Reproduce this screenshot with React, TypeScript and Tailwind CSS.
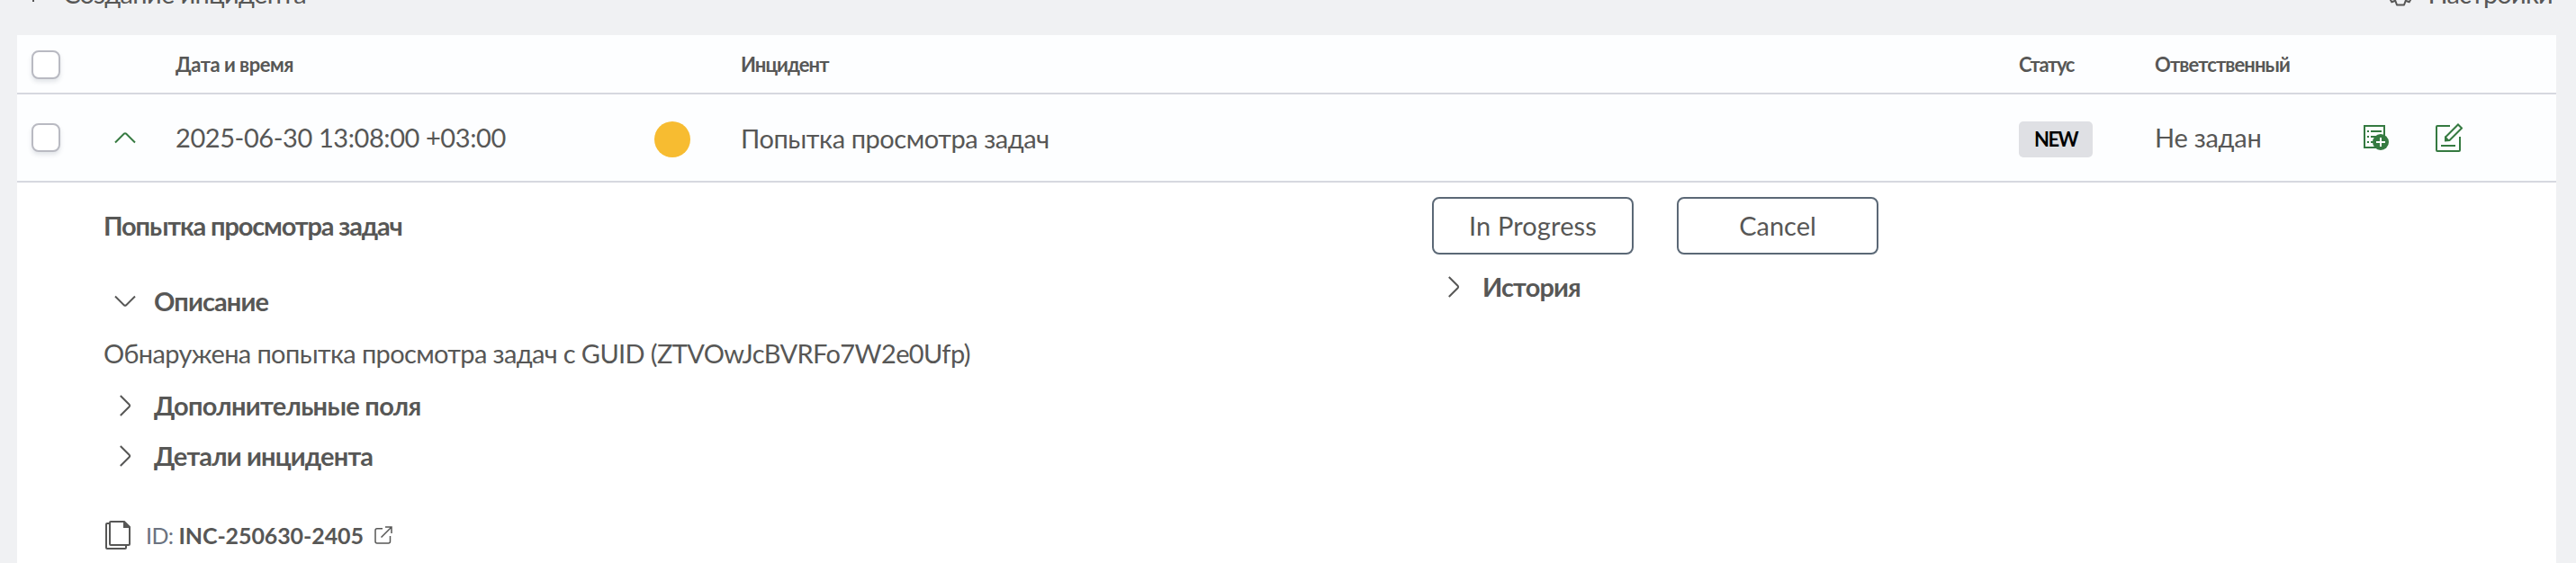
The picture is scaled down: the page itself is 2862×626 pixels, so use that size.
import React from 'react';
import { clsx } from 'clsx';

const columns = 'grid grid-cols-[108px_68px_532px_96px_1420px_151px_232px_1fr] items-center';

const Checkbox: React.FC = () => (
  <button className="ml-4 block size-8 rounded-lg border-2 border-[#b9bac2] bg-white shadow-[0_3px_5px_rgba(60,70,90,0.14)]" />
);

const Chevron = ({ dir, className }: { dir: 'up' | 'down' | 'right'; className?: string }) => {
  const paths = {
    up: 'M1 17.5 L11 7.6 Q12 6.8 13 7.6 L23 17.5',
    down: 'M1 6.5 L11 16.4 Q12 17.2 13 16.4 L23 6.5',
    right: 'M6.8 1 L16.8 11 Q17.6 12 16.8 13 L6.8 23',
  };
  return (
    <svg className={clsx('size-6 shrink-0', className)} viewBox="0 0 24 24" fill="none" stroke="currentColor" strokeWidth="2">
      <path d={paths[dir]} />
    </svg>
  );
};

const PlusIcon = () => (
  <svg className="size-6 shrink-0" viewBox="0 0 24 24" fill="none" stroke="currentColor" strokeWidth="2">
    <path d="M12 2V22M2 12H22" />
  </svg>
);

const GearIcon = () => (
  <svg className="size-[30px] shrink-0" viewBox="-15 -15 30 30" fill="none" stroke="currentColor" strokeWidth="2" strokeLinejoin="round">
    <path d="M4 13.5L5.8 8.7L9.7 10.2L13.7 3.3L10 0L13.7 -3.3L9.7 -10.2L5.8 -8.7L4 -13.5H-4L-5.8 -8.7L-9.7 -10.2L-13.7 -3.3L-10 0L-13.7 3.3L-9.7 10.2L-5.8 8.7L-4 13.5Z" />
    <circle r="4.5" />
  </svg>
);

const AddTaskIcon = () => (
  <svg className="h-7 w-[28px]" viewBox="0 0 28 28" fill="none" stroke="currentColor" strokeWidth="2">
    <path d="M1 1H23V25H1Z" />
    <path d="M4 7H6M8 7H20M4 13H6M8 13H20M4 19H6M8 19H14" />
    <circle cx="19" cy="19" r="9" fill="currentColor" stroke="none" />
    <path d="M19 14V24M14 19H24" stroke="#fdfeff" />
  </svg>
);

const EditIcon = () => (
  <svg className="h-8 w-[30px]" viewBox="0 0 30 32" fill="none" stroke="currentColor" strokeWidth="2">
    <path d="M16 3H2Q1 3 1 4V30Q1 31 2 31H26Q27 31 27 30V15" />
    <path d="M6 25H22" />
    <path d="M25 1.5L29 5.5L15.5 19L11 19.5V15.5Z" />
    <path d="M10.5 14L16 19.5H10.5Z" fill="currentColor" stroke="none" />
  </svg>
);

const CopyIcon = () => (
  <svg className="h-8 w-7 shrink-0" viewBox="0 0 28 32" fill="none" stroke="currentColor" strokeWidth="2">
    <path d="M6 1H21L27 7V26Q27 27 26 27H6Q5 27 5 26V2Q5 1 6 1Z" />
    <path d="M5 3H2Q1 3 1 4V30Q1 31 2 31H22Q23 31 23 30V27" />
    <path d="M20 0.5L27.5 8H20Z" fill="currentColor" stroke="none" />
  </svg>
);

const ExternalIcon = () => (
  <svg className="h-5 w-5 shrink-0" viewBox="0 0 20 20" fill="none" stroke="currentColor" strokeWidth="1.5">
    <path d="M9 2.8H3Q1 2.8 1 4.8V17Q1 19 3 19H15.500Q17.500 19 17.500 17V11" />
    <path d="M7.500 12.500L19 1M12 1H19V8" />
  </svg>
);

const Section = ({ title, open, className }: { title: string; open?: boolean; className: string }) => (
  <div className="flex h-14 items-center gap-5">
    <Chevron dir={open ? 'down' : 'right'} />
    <h3 className={clsx('pb-0.5 text-[29px] font-bold', className)}>{title}</h3>
  </div>
);

const ActionButton = ({ label, className }: { label: string; className?: string }) => (
  <button className={clsx('h-16 w-56 rounded-lg border-2 border-[#5b6876] pb-0.5 text-[29px]', className)}>{label}</button>
);

export default function App() {
  return (
    <div className="flex h-[626px] w-full flex-col overflow-hidden whitespace-nowrap bg-[#f0f1f3] font-['Lato','Noto_Sans',sans-serif] leading-none text-[#575756]">
      {/* Toolbar, scrolled almost out of view */}
      <div className="-mt-[28px] mb-[27px] flex h-10 shrink-0 items-center justify-between pl-[25px] pr-[26px] text-[29px]">
        <div className="flex items-center gap-[21px]">
          <PlusIcon />
          <span className="tracking-[-0.65px]">Создание инцидента</span>
        </div>
        <div className="flex items-center gap-[15px]">
          <GearIcon />
          <span className="tracking-[-0.8px]">Настройки</span>
        </div>
      </div>

      <div className="ml-[19px] mr-[22px] flex-1 bg-white">
        {/* Table header */}
        <div className={clsx(columns, 'h-[66px] border-b-2 border-[#d6d8df] bg-[#fdfeff] pt-px text-[22px] font-bold')}>
          <Checkbox />
          <span />
          <span className="tracking-[-0.5px]">Дата и время</span>
          <span />
          <span className="tracking-[-0.95px]">Инцидент</span>
          <span className="tracking-[-1.4px]">Статус</span>
          <span className="tracking-[-0.9px]">Ответственный</span>
        </div>

        {/* Incident row */}
        <div className={clsx(columns, 'h-[98px] border-b-2 border-[#d6d8df] bg-[#fdfeff] text-[29px]')}>
          <Checkbox />
          <Chevron dir="up" className="text-[#357a41]" />
          <span className="pb-px tracking-[-0.42px]">2025-06-30 13:08:00 +03:00</span>
          <span className="mt-1 size-10 rounded-full bg-[#f7bc31]" />
          <span className="pt-px tracking-[-0.43px]">Попытка просмотра задач</span>
          <span className="mt-1 flex h-10 w-[82px] items-center justify-center rounded-[5px] bg-[#dfe0e4] text-[22px] font-bold tracking-[-1.6px] text-black">
            NEW
          </span>
          <span className="pb-px tracking-[-0.25px]">Не задан</span>
          <div className="flex items-center gap-[52px] text-[#357a41]">
            <AddTaskIcon />
            <EditIcon />
          </div>
        </div>

        {/* Expanded details */}
        <div className="flex pl-[94px] pt-4">
          <div className="w-[1478px]">
            <h2 className="flex h-16 items-center pb-0.5 pl-0.5 text-[29px] font-bold tracking-[-1.15px]">Попытка просмотра задач</h2>
            <div className="mt-6 pl-3.5">
              <Section title="Описание" open className="tracking-[-0.9px]" />
            </div>
            <p className="flex h-[60px] items-center pb-px pl-0.5 text-[29px] tracking-[-0.63px]">
              Обнаружена попытка просмотра задач с GUID (ZTVOwJcBVRFo7W2e0Ufp)
            </p>
            <div className="pl-3.5">
              <Section title="Дополнительные поля" className="tracking-[-0.7px]" />
              <Section title="Детали инцидента" className="tracking-[-0.85px]" />
            </div>
            <div className="mt-10 flex h-10 items-center pl-1 text-[25px]">
              <CopyIcon />
              <span className="ml-[17px] tracking-[-0.6px] text-[#6b7280]">ID:</span>
              <span className="ml-1.5 font-bold tracking-[-0.1px]">INC-250630-2405</span>
              <span className="ml-3">
                <ExternalIcon />
              </span>
            </div>
          </div>
          <div>
            <div className="flex gap-12">
              <ActionButton label="In Progress" className="tracking-[0.15px]" />
              <ActionButton label="Cancel" />
            </div>
            <div className="mt-2 pl-3">
              <Section title="История" className="tracking-[-0.9px]" />
            </div>
          </div>
        </div>
      </div>
    </div>
  );
}
